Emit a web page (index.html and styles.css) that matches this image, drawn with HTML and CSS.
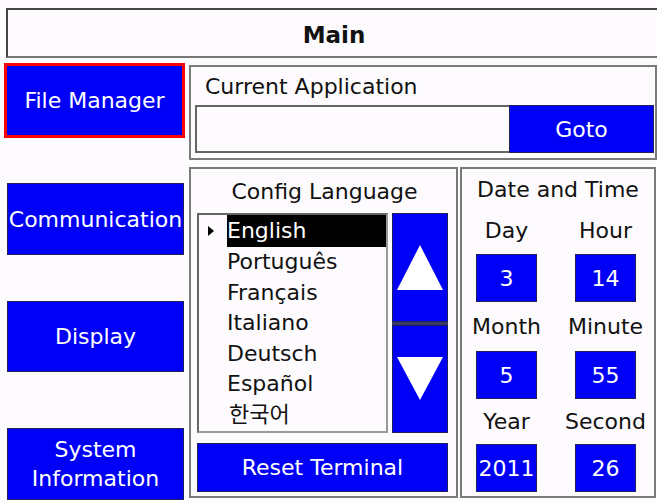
FILE: index.html
```html
<!DOCTYPE html>
<html>
<head>
<meta charset="utf-8">
<link rel="stylesheet" href="styles.css">
</head>
<body>
<div class="screen">
  <div class="title">Main</div>
  <div class="content">
    <div class="nav">
      <div class="btn navbtn selected">File Manager</div>
      <div class="btn navbtn comm">Communication</div>
      <div class="btn navbtn disp">Display</div>
      <div class="btn navbtn sys">System<br>Information</div>
    </div>
    <div class="main">
      <div class="panel app">
        <div class="app-label">Current Application</div>
        <div class="app-row">
          <div class="field"></div>
          <div class="btn goto">Goto</div>
        </div>
      </div>
      <div class="lower">
        <div class="panel lang">
          <div class="panel-title">Config Language</div>
          <div class="lang-row">
            <div class="list">
              <div class="item active"><span class="marker"></span>English</div>
              <div class="item">Português</div>
              <div class="item">Français</div>
              <div class="item">Italiano</div>
              <div class="item">Deutsch</div>
              <div class="item">Español</div>
              <div class="item ko">한국어</div>
            </div>
            <div class="scroll">
              <div class="btn half"><span class="tri up"></span></div>
              <div class="sep"></div>
              <div class="btn half"><span class="tri down"></span></div>
            </div>
          </div>
          <div class="btn reset">Reset Terminal</div>
        </div>
        <div class="panel dt">
          <div class="panel-title dt-title">Date and Time</div>
          <div class="dt-grid">
            <div class="lbl first">Day</div>
            <div class="lbl first">Hour</div>
            <div class="btn val">3</div>
            <div class="btn val">14</div>
            <div class="lbl">Month</div>
            <div class="lbl">Minute</div>
            <div class="btn val">5</div>
            <div class="btn val">55</div>
            <div class="lbl">Year</div>
            <div class="lbl">Second</div>
            <div class="btn val">2011</div>
            <div class="btn val">26</div>
          </div>
        </div>
      </div>
    </div>
  </div>
</div>
</body>
</html>
```

FILE: styles.css
```css
* { box-sizing: border-box; }
html, body {
  margin: 0;
  background: #fdfbfd;
  overflow: hidden;
}
body {
  font-family: "DejaVu Sans", "Noto Sans CJK KR", sans-serif;
  font-size: 22px;
  color: #111;
}
.screen {
  width: 657px;
  height: 502px;
  padding-top: 8px;
}
.title {
  margin-left: 6px;
  width: 660px;
  height: 50px;
  border: 2px solid #444;
  border-bottom-color: #777;
  border-right: none;
  background: #fdfbfd;
  display: flex;
  align-items: center;
  justify-content: center;
  padding-top: 3px;
  padding-right: 6px;
  font-weight: bold;
  font-size: 23px;
}
.content {
  display: flex;
  margin-top: 5px;
}
.nav {
  width: 181px;
  margin-left: 4px;
  display: flex;
  flex-direction: column;
}
.btn {
  background: #0000f6;
  color: #fff;
  display: flex;
  align-items: center;
  justify-content: center;
  text-align: center;
}
.navbtn {
  margin-left: 3px;
  width: 177px;
  border: 1px solid #20205a;
  line-height: 29px;
  white-space: nowrap;
}
.selected {
  margin-left: 0;
  width: 181px;
  height: 75px;
  border: 3px solid #f00;
}
.comm { margin-top: 45px; height: 72px; }
.disp { margin-top: 46px; height: 71px; }
.sys { margin-top: 56px; height: 72px; }

.main {
  margin-left: 4px;
  width: 468px;
  margin-top: 2px;
}
.panel {
  border: 2px solid #7a7a7a;
  background: #fdfbfd;
}
.app {
  height: 95px;
  padding-left: 4px;
}
.app-label {
  height: 38px;
  padding-left: 10px;
  padding-top: 6px;
  line-height: 28px;
}
.app-row {
  display: flex;
  height: 48px;
}
.field {
  width: 314px;
  border: 2px solid #666;
  border-right: none;
  background: #fdfbfd;
}
.goto {
  width: 145px;
  border: 1px solid #20205a;
}
.lower {
  display: flex;
  margin-top: 7px;
  height: 331px;
}
.lang {
  width: 269px;
  padding-left: 6px;
}
.panel-title {
  height: 44px;
  display: flex;
  align-items: center;
  justify-content: center;
  padding-right: 4px;
}
.lang-row {
  display: flex;
  gap: 4px;
  height: 220px;
}
.list {
  width: 191px;
  border: 2px solid #666;
  border-right-color: #999;
  border-bottom-color: #999;
  background: #fdfbfd;
  overflow: hidden;
}
.item {
  height: 30.5px;
  line-height: 30.5px;
  padding-left: 28px;
  position: relative;
  white-space: nowrap;
}
.item.active {
  color: #fff;
  height: 32px;
  line-height: 32px;
  background: linear-gradient(to right, #fdfbfd 0, #fdfbfd 28px, #000 28px);
}
.marker {
  position: absolute;
  left: 9px;
  top: 11px;
  width: 0;
  height: 0;
  border-top: 5px solid transparent;
  border-bottom: 5px solid transparent;
  border-left: 6px solid #000;
}
.item.ko {
  padding-left: 30px;
}
.scroll {
  width: 56px;
  display: flex;
  flex-direction: column;
}
.half {
  flex: 1;
  border: 1px solid #20205a;
}
.sep {
  height: 3px;
  background: #3a3a6a;
}
.tri {
  width: 0;
  height: 0;
  border-left: 23px solid transparent;
  border-right: 23px solid transparent;
}
.tri.up { border-bottom: 45px solid #fff; }
.tri.down { border-top: 43px solid #fff; }
.reset {
  margin-top: 10px;
  width: 251px;
  height: 49px;
  border: 1px solid #20205a;
}
.dt {
  margin-left: 2px;
  width: 196px;
  padding-left: 14px;
}
.dt-title {
  height: 37px;
  margin-left: -14px;
  padding-right: 0;
  padding-top: 4px;
}
.dt-grid {
  display: grid;
  grid-template-columns: 61px 61px;
  column-gap: 38px;
  grid-template-rows: 48px 48px 49px 48px 45px 48px;
}
.lbl {
  display: flex;
  align-items: center;
  justify-content: center;
  white-space: nowrap;
}
.val {
  border: 1px solid #20205a;
}
```
